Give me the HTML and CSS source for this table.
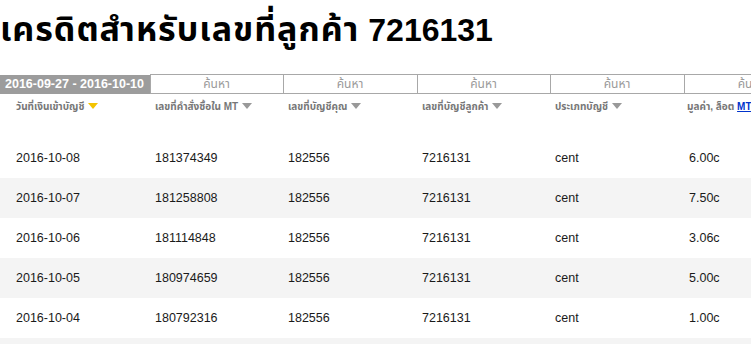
FILE: index.html
```html
<!DOCTYPE html>
<html lang="th">
<head>
<meta charset="utf-8">
<title>เครดิตสำหรับเลขที่ลูกค้า 7216131</title>
<link rel="stylesheet" href="styles.css">
</head>
<body>
<h1 class="title"><span class="thai">เครดิตสำหรับเลขที่ลูกค้า</span> 7216131</h1>
<table class="grid">
  <colgroup>
    <col class="c1"><col class="c2"><col class="c3"><col class="c4"><col class="c5"><col class="c6"><col class="c7">
  </colgroup>
  <thead>
    <tr class="filters">
      <th class="range">2016-09-27 - 2016-10-10</th>
      <th class="search">ค้นหา</th>
      <th class="search">ค้นหา</th>
      <th class="search">ค้นหา</th>
      <th class="search">ค้นหา</th>
      <th class="search">ค้นหา</th>
      <th class="search">ค้นหา</th>
    </tr>
    <tr class="sorts">
      <th class="first">วันที่เงินเข้าบัญชี <span class="arrow active"></span></th>
      <th>เลขที่คำสั่งซื้อใน MT <span class="arrow"></span></th>
      <th>เลขที่บัญชีคุณ <span class="arrow"></span></th>
      <th>เลขที่บัญชีลูกค้า <span class="arrow"></span></th>
      <th>ประเภทบัญชี <span class="arrow"></span></th>
      <th class="value">มูลค่า, ล็อต <a class="unit" href="#">MT</a></th>
      <th></th>
    </tr>
  </thead>
  <tbody>
    <tr><td class="first">2016-10-08</td><td>181374349</td><td>182556</td><td>7216131</td><td>cent</td><td class="num">6.00c</td><td></td></tr>
    <tr><td class="first">2016-10-07</td><td>181258808</td><td>182556</td><td>7216131</td><td>cent</td><td class="num">7.50c</td><td></td></tr>
    <tr><td class="first">2016-10-06</td><td>181114848</td><td>182556</td><td>7216131</td><td>cent</td><td class="num">3.06c</td><td></td></tr>
    <tr><td class="first">2016-10-05</td><td>180974659</td><td>182556</td><td>7216131</td><td>cent</td><td class="num">5.00c</td><td></td></tr>
    <tr><td class="first">2016-10-04</td><td>180792316</td><td>182556</td><td>7216131</td><td>cent</td><td class="num">1.00c</td><td></td></tr>
    <tr><td class="first">2016-10-03</td><td>180651234</td><td>182556</td><td>7216131</td><td>cent</td><td class="num">2.00c</td><td></td></tr>
  </tbody>
</table>
</body>
</html>
```
FILE: styles.css
```css
html, body {
  margin: 0;
  padding: 0;
  overflow: hidden;
  background: #fff;
}
body {
  font-family: "Liberation Sans", Arial, Tahoma, "Noto Sans Thai", sans-serif;
  color: #1a1a1a;
  width: 900px;
}
.title {
  margin: 0;
  padding: 9px 0 0 0;
  height: 40px;
  line-height: 40px;
  font-size: 32px;
  font-weight: bold;
  color: #000;
  white-space: nowrap;
}
.title .thai {
  font-size: 34px;
  letter-spacing: 1px;
}
.grid {
  margin-top: 25px;
  border-collapse: collapse;
  table-layout: fixed;
  width: 885px;
}
.c1 { width: 150px; }
.c2 { width: 133px; }
.c3 { width: 134px; }
.c4 { width: 133px; }
.c5 { width: 134px; }
.c6 { width: 134px; }
.c7 { width: 67px; }

.filters th {
  height: 18px;
  padding: 0;
  font-weight: normal;
  font-size: 12px;
  line-height: 16px;
}
.filters .range {
  background: #9c9c9c;
  color: #fff;
  font-weight: bold;
  font-size: 12.5px;
  text-align: left;
  padding-left: 5px;
  white-space: nowrap;
  overflow: hidden;
}
.filters .search {
  border: 1px solid #a8a8a8;
  color: #9a9a9a;
  text-align: center;
}
.sorts th {
  height: 44px;
  padding: 5px 0 0 5px;
  vertical-align: top;
  text-align: left;
  font-size: 10px;
  font-weight: bold;
  color: #777;
  white-space: nowrap;
  box-sizing: border-box;
}
.sorts th.first { padding-left: 16px; }
.sorts th.value { padding-left: 3px; }
.arrow {
  display: inline-block;
  width: 0;
  height: 0;
  border-left: 5px solid transparent;
  border-right: 5px solid transparent;
  border-top: 6px solid #999;
  vertical-align: 1px;
  margin-left: 1px;
}
.arrow.active { border-top-color: #f3c300; }
.unit {
  color: #0033cc;
  text-decoration: underline;
}
tbody td {
  height: 40px;
  padding: 0 0 0 5px;
  font-size: 12.5px;
  color: #1a1a1a;
  white-space: nowrap;
}
tbody td.first { padding-left: 16px; }
tbody td.num {
  text-align: right;
  padding-right: 99px;
}
tbody tr:nth-child(even) td { background: #f4f4f4; }
```
